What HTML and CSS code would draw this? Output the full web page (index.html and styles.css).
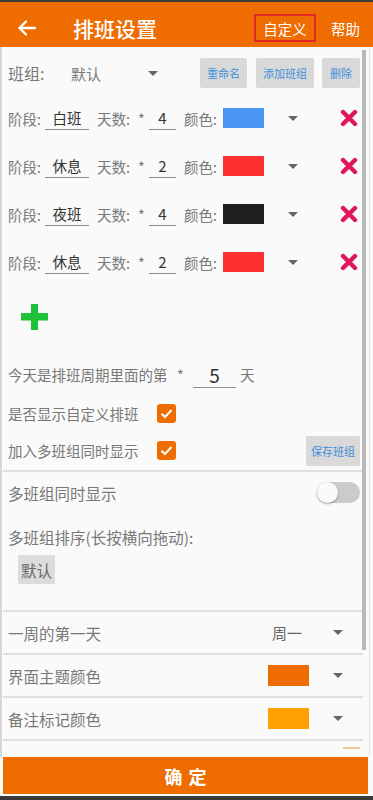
FILE: index.html
```html
<!DOCTYPE html>
<html lang="zh-CN">
<head>
<meta charset="utf-8">
<title>排班设置</title>
<link rel="stylesheet" href="styles.css">
</head>
<body>
<div class="app">
  <div class="status"></div>
  <header class="bar">
    <svg class="back" viewBox="0 0 19 16"><path d="M18 8H2.5M9 1.5L2.5 8L9 14.5" fill="none" stroke="#fff" stroke-width="2.4" stroke-linecap="round" stroke-linejoin="round"/></svg>
    <div class="title">排班设置</div>
    <div class="custom">自定义</div>
    <div class="help">帮助</div>
  </header>
  <main class="content">
    <div class="scrollbar"></div>
    <div class="group-row">
      <span class="g-label">班组:</span>
      <span class="g-value">默认</span>
      <span class="tri"></span>
      <span class="btn btn-rename">重命名</span>
      <span class="btn btn-add">添加班组</span>
      <span class="btn btn-del">删除</span>
    </div>
    <div class="stages">
      <div class="stage">
        <span class="s-label">阶段:</span><span class="field f-name">白班</span>
        <span class="s-days">天数:</span><span class="star">*</span><span class="field f-num">4</span>
        <span class="s-color">颜色:</span><span class="swatch sw-blue"></span><span class="tri"></span>
        <svg class="del" viewBox="0 0 18 18"><path d="M3 3L15 15M15 3L3 15" stroke="#e0185a" stroke-width="4.4" stroke-linecap="round"/></svg>
      </div>
      <div class="stage">
        <span class="s-label">阶段:</span><span class="field f-name">休息</span>
        <span class="s-days">天数:</span><span class="star">*</span><span class="field f-num">2</span>
        <span class="s-color">颜色:</span><span class="swatch sw-red"></span><span class="tri"></span>
        <svg class="del" viewBox="0 0 18 18"><path d="M3 3L15 15M15 3L3 15" stroke="#e0185a" stroke-width="4.4" stroke-linecap="round"/></svg>
      </div>
      <div class="stage">
        <span class="s-label">阶段:</span><span class="field f-name">夜班</span>
        <span class="s-days">天数:</span><span class="star">*</span><span class="field f-num">4</span>
        <span class="s-color">颜色:</span><span class="swatch sw-black"></span><span class="tri"></span>
        <svg class="del" viewBox="0 0 18 18"><path d="M3 3L15 15M15 3L3 15" stroke="#e0185a" stroke-width="4.4" stroke-linecap="round"/></svg>
      </div>
      <div class="stage">
        <span class="s-label">阶段:</span><span class="field f-name">休息</span>
        <span class="s-days">天数:</span><span class="star">*</span><span class="field f-num">2</span>
        <span class="s-color">颜色:</span><span class="swatch sw-red"></span><span class="tri"></span>
        <svg class="del" viewBox="0 0 18 18"><path d="M3 3L15 15M15 3L3 15" stroke="#e0185a" stroke-width="4.4" stroke-linecap="round"/></svg>
      </div>
    </div>
    <div class="add">
      <svg class="plus" viewBox="0 0 27 26"><rect x="10" y="0" width="7" height="26" fill="#1ec23a"/><rect x="0" y="9" width="27" height="7.5" fill="#1ec23a"/></svg>
    </div>
    <div class="today">
      <span class="t-label">今天是排班周期里面的第</span><span class="t-star">*</span><span class="field f-today">5</span><span class="t-day">天</span>
    </div>
    <div class="check-row">
      <span class="check-label">是否显示自定义排班</span>
      <span class="check"><svg viewBox="0 0 19 19"><path d="M4.5 9.8L8 13L14.5 6" fill="none" stroke="#fff" stroke-width="2"/></svg></span>
    </div>
    <div class="check-row check-row2">
      <span class="check-label">加入多班组同时显示</span>
      <span class="check"><svg viewBox="0 0 19 19"><path d="M4.5 9.8L8 13L14.5 6" fill="none" stroke="#fff" stroke-width="2"/></svg></span>
      <span class="btn btn-save">保存班组</span>
    </div>
    <div class="divider"></div>
    <div class="switch-row">
      <span>多班组同时显示</span>
      <span class="toggle"></span>
    </div>
    <div class="sort-label">多班组排序(长按横向拖动):</div>
    <div class="chip-wrap"><span class="chip">默认</span></div>
    <div class="divider"></div>
    <div class="setting">
      <span>一周的第一天</span>
      <span class="set-value">周一</span>
      <span class="tri"></span>
    </div>
    <div class="setting">
      <span>界面主题颜色</span>
      <span class="swatch set-swatch sw-orange"></span>
      <span class="tri"></span>
    </div>
    <div class="setting">
      <span>备注标记颜色</span>
      <span class="swatch set-swatch sw-amber"></span>
      <span class="tri"></span>
    </div>
    <div class="mini"></div>
  </main>
  <div class="confirm">确定</div>
  <div class="gap"></div>
  <div class="bottom"></div>
</div>
</body>
</html>
```
FILE: styles.css
```css
* { box-sizing: border-box; margin: 0; padding: 0; }
html, body { width: 373px; height: 800px; overflow: hidden; }
body {
  background: #fafafa;
  font-family: "Noto Sans CJK SC", "Noto Sans", sans-serif;
  color: #787878;
}
.app { display: flex; flex-direction: column; height: 800px; }
.status { flex: none; height: 2px; background: #3a3a3a; }
.bar {
  flex: none; height: 45px; padding-top: 7px;
  background: #ef6c00; color: #fff;
  display: flex; align-items: center;
}
.back { margin-left: 17px; width: 19px; height: 16px; }
.title { margin-left: 37px; font-size: 21px; font-weight: 500; }
.custom {
  margin-left: auto; width: 62px; height: 28px;
  border: 2px solid #e02828;
  display: flex; align-items: center; justify-content: center;
  font-size: 14.5px;
}
.help { margin-left: 15px; margin-right: 13px; font-size: 14.5px; }

.content {
  flex: 1 1 auto; min-height: 0; overflow: hidden; position: relative;
  margin-right: 3px;
  border-left: 2px solid #d6d6d6; border-right: 1px solid #e6e6e6;
  padding: 11px 9px 0 6px;
}
.scrollbar {
  position: absolute; right: 3px; top: 3px;
  width: 4px; height: 600px; background: #b9b9b9;
}
.tri {
  flex: none; width: 0; height: 0;
  border-left: 5px solid transparent; border-right: 5px solid transparent;
  border-top: 5px solid #666;
}
.group-row { display: flex; align-items: center; height: 30px; }
.g-label { width: 63px; font-size: 16px; }
.g-value { width: 77px; font-size: 15px; }
.btn {
  height: 30px; background: #d9d9d9; color: #3d8fdc; font-size: 11px;
  display: flex; align-items: center; justify-content: center;
  border-radius: 2px;
}
.btn-rename { margin-left: auto; width: 47px; }
.btn-add { margin-left: 9px; width: 58px; }
.btn-del { margin-left: 8px; width: 38px; }

.stages { margin-top: 6px; }
.stage { height: 48px; display: flex; align-items: center; font-size: 14.5px; }
.s-label { width: 37px; }
.field {
  height: 24px; border-bottom: 1px solid #8c8c8c;
  display: flex; align-items: center; justify-content: center;
  color: #333; font-size: 14.5px;
}
.f-name { width: 44px; }
.s-days { margin-left: 8px; width: 41px; }
.star { width: 11px; }
.f-num { width: 27px; font-size: 15px; }
.s-color { margin-left: 8px; width: 38px; }
.swatch { flex: none; width: 41px; height: 20px; margin-left: 1px; }
.sw-blue { background: #4a94f2; }
.sw-red { background: #fd3131; }
.sw-black { background: #202020; }
.sw-orange { background: #ef6c00; }
.sw-amber { background: #ffa000; }
.stage .tri { margin-left: 24px; }
.del { margin-left: auto; margin-right: 2px; width: 18px; height: 18px; }

.add { height: 68px; padding-top: 18px; padding-left: 13px; }
.plus { display: block; width: 27px; height: 26px; }

.today { height: 41px; display: flex; align-items: center; font-size: 14.5px; }
.t-label { width: 169px; }
.t-star { width: 16px; }
.f-today { width: 43px; height: 26px; font-size: 19px; }
.t-day { margin-left: 4px; }

.check-row { height: 36px; display: flex; align-items: center; font-size: 14.5px; }
.check-row2 { height: 39px; }
.check-label { width: 149px; }
.check {
  width: 19px; height: 19px; background: #ef6c00; border-radius: 3px;
  display: flex;
}
.check svg { width: 19px; height: 19px; }
.btn-save { margin-left: auto; width: 54px; }

.divider { height: 2px; background: #e0e0e0; margin: 0 -3px 0 -5px; }
.switch-row { height: 41px; display: flex; align-items: center; font-size: 15.5px; }
.toggle {
  margin-left: auto; width: 43px; height: 21px; border-radius: 11px;
  background: #cbcbcb; position: relative;
}
.toggle::before {
  content: ""; position: absolute; left: 0; top: 0;
  width: 21px; height: 21px; border-radius: 50%;
  background: #fafafa; box-shadow: 0 1px 2px rgba(0,0,0,0.35);
}
.sort-label { margin-top: 12px; line-height: 24px; font-size: 15.5px; }
.chip-wrap { display: flex; margin-top: 6px; margin-bottom: 26px; padding-left: 10px; }
.chip {
  width: 37px; height: 29px; background: #dcdcdc; color: #666; font-size: 15.5px;
  display: flex; align-items: center; justify-content: center;
}
.setting {
  height: 43px; display: flex; align-items: center; font-size: 15.5px;
  border-bottom: 2px solid #e0e0e0;
  margin: 0 -3px 0 -5px; padding: 0 3px 0 5px;
}
.set-value { margin-left: auto; width: 30px; font-size: 15px; color: #666; }
.setting .tri { margin-left: 31px; margin-right: 17px; }
.set-swatch { margin-left: auto; height: 21px; }
.set-swatch + .tri { margin-left: 24px; }
.mini { margin-top: 6px; margin-left: auto; width: 17px; height: 2px; background: #f0c898; }

.confirm {
  flex: none; height: 37px; margin: 0 5px 0 3px;
  background: #ef6c00; color: #fff;
  font-size: 18px; font-weight: 700; letter-spacing: 6px; padding-left: 6px;
  display: flex; align-items: center; justify-content: center;
}
.gap { flex: none; height: 2px; }
.bottom { flex: none; height: 4px; background: #3a3a3a; }
```
